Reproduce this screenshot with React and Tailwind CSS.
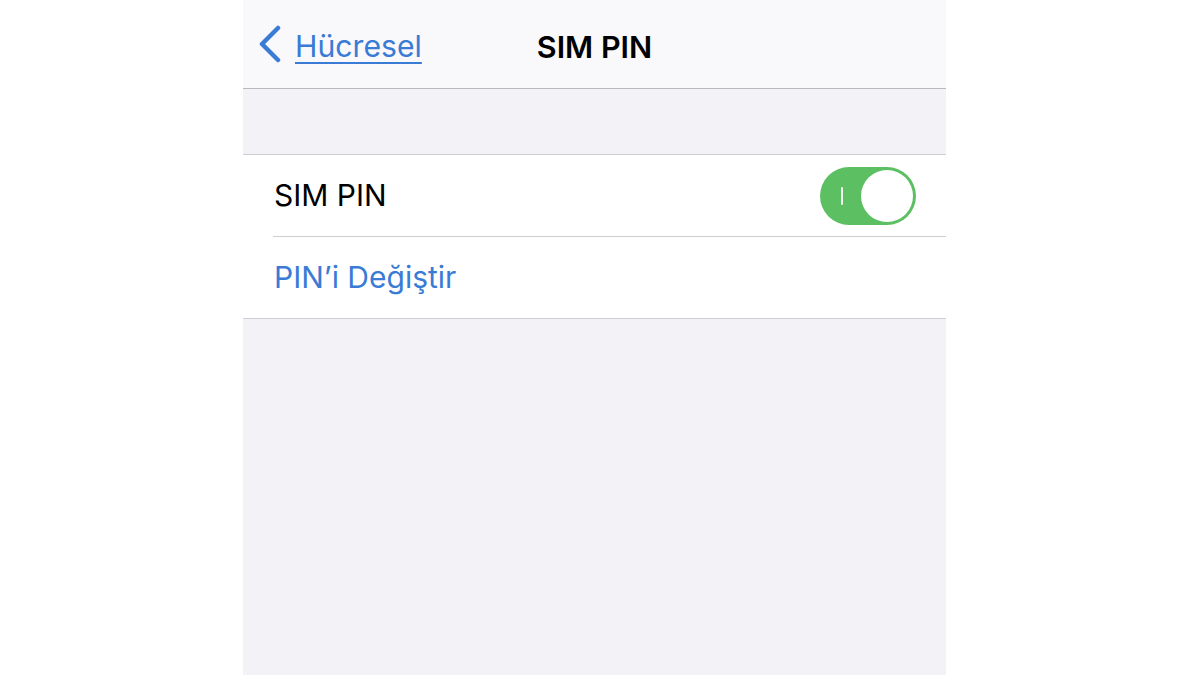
export default function App() {
  return (
    <div className="w-[1200px] h-[675px] bg-white flex pl-[243px] overflow-hidden" style={{ fontFamily: 'Inter, "Liberation Sans", sans-serif' }}>
      <div className="w-[703px] h-full bg-[#f2f2f7] flex flex-col">
        {/* nav bar */}
        <div className="h-[89px] bg-[#f9f9fb] border-b border-[#b9b9bd] relative flex items-center pt-[6px]">
          <div className="flex items-center pl-[14px] text-[#3a7bd5]">
            <svg width="26" height="38" viewBox="0 0 26 38" fill="none" className="mt-[-5px]">
              <path d="M21 3 L5 19 L21 35" stroke="#3a7bd5" strokeWidth="4.5" strokeLinecap="round" strokeLinejoin="round" />
            </svg>
            <span className="ml-[12px] text-[30.2px] underline decoration-[2px] underline-offset-[5px]">Hücresel</span>
          </div>
          <div className="absolute inset-x-0 text-center text-[30.5px] font-semibold text-black">SIM PIN</div>
        </div>
        <div className="h-[65px]" />
        {/* group */}
        <div className="bg-white border-y border-[#cfcfd3]">
          <div className="h-[81px] flex items-center justify-between pl-[31px] pr-[30px]">
            <span className="text-[30px] text-black">SIM PIN</span>
            <div className="w-[96px] h-[58px] rounded-full bg-[#5cbf62] relative flex items-center">
              <span className="absolute left-[21px] w-[2px] h-[18px] bg-white/90 rounded-sm" />
              <span className="absolute right-[3px] w-[52px] h-[52px] rounded-full bg-white" />
            </div>
          </div>
          <div className="ml-[30px] border-t border-[#cfcfd3]" />
          <div className="h-[81px] flex items-center pl-[31px]">
            <span className="text-[30px] text-[#3a7bd5]">PIN’i Değiştir</span>
          </div>
        </div>
        <div className="flex-1" />
      </div>
    </div>
  );
}
